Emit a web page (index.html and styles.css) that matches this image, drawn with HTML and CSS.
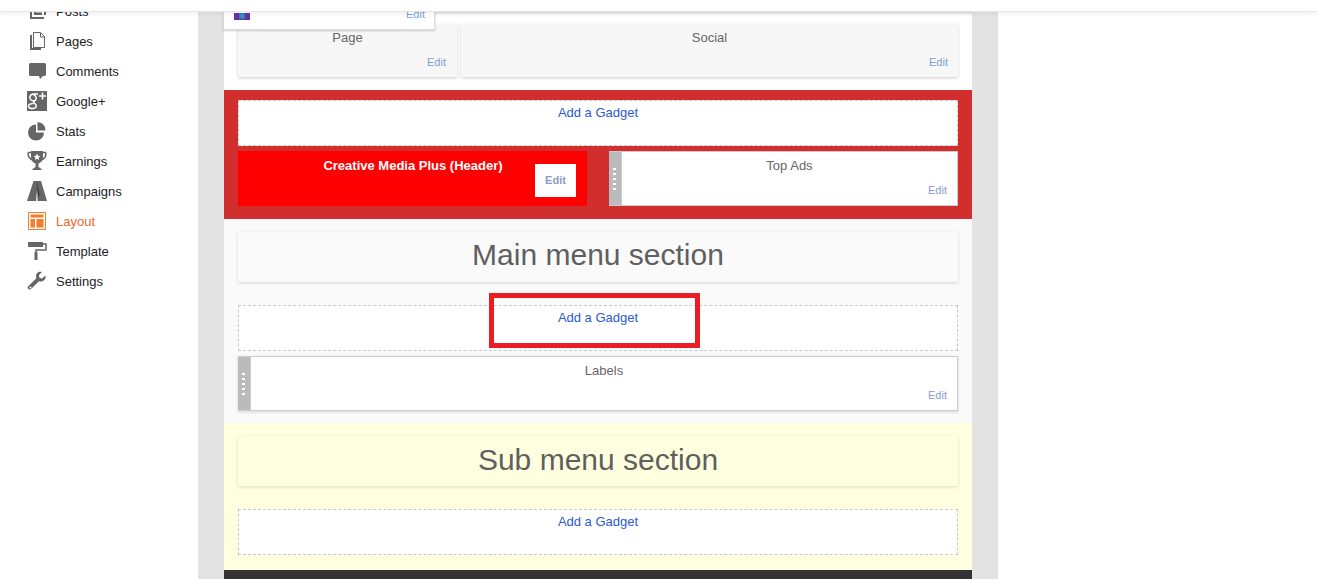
FILE: index.html
```html
<!DOCTYPE html>
<html lang="en">
<head>
    <meta charset="UTF-8">
    <title>Layout</title>
    <link rel="stylesheet" href="styles.css">
</head>
<body>
    <div class="topbar"></div>
    <div class="main">
        <nav class="sidebar">
            <a class="nav-item">
                <svg class="nav-icon" viewBox="0 0 20 20"><path d="M6 1h13v13h-2V3H6z M3 5h2v11h12v2H3z M7 5h8v9H7z" fill="#666"/><path d="M9 8h8M9 11h8" stroke="#fff"/></svg>
                <span>Posts</span>
            </a>
            <a class="nav-item">
                <svg class="nav-icon" viewBox="0 0 20 20"><path d="M3 4h2v13h9v2H3z" fill="#666"/><path d="M6.500 1.500h7l4 4v11h-11z" fill="#fff" stroke="#666"/><path d="M13.500 2v4h4" fill="none" stroke="#666"/></svg>
                <span>Pages</span>
            </a>
            <a class="nav-item">
                <svg class="nav-icon" viewBox="0 0 20 20"><path d="M3.500 2h14a1.500 1.500 0 0 1 1.500 1.500v10a1.500 1.500 0 0 1-1.500 1.500H16l-3 3-1-3H3.500A1.500 1.500 0 0 1 2 13.500v-10A1.500 1.500 0 0 1 3.500 2z" fill="#666"/></svg>
                <span>Comments</span>
            </a>
            <a class="nav-item">
                <svg class="nav-icon" viewBox="0 0 20 20"><rect width="20" height="20" fill="#666"/><path d="M15.500 1.500v7M12 5h7" stroke="#fff" stroke-width="1.600"/><path d="M11 3H6.500a3 3 0 0 0-.5 6.800c2 .4 3.500-1 3-3.300C8.600 4.800 7 3.400 5.800 3.500M7.500 10c-1 1-1 1.800.8 3.200 1.700 1.400 1.500 4-2.300 4.300-2.800.2-4.500-.8-4.500-2.400 0-1.800 2.300-2.700 5-2.500" fill="none" stroke="#fff" stroke-width="1.500"/></svg>
                <span>Google+</span>
            </a>
            <a class="nav-item">
                <svg class="nav-icon" viewBox="0 0 20 20"><path d="M9 3.500a8 8 0 1 0 8 8H9z" fill="#666"/><path d="M10.500 1a8 8 0 0 1 8 8.500h-8z" fill="#666"/></svg>
                <span>Stats</span>
            </a>
            <a class="nav-item">
                <svg class="nav-icon" viewBox="0 0 20 20"><path d="M1 1.500h3M16 1.500h3M1 1.500c0 5 2 7 5 7.500M19 1.500c0 5-2 7-5 7.500" fill="none" stroke="#666" stroke-width="1.500"/><path d="M4 0h12v6c0 4-2.500 6-4.500 6.500V16l3 2v1h-9v-1l3-2v-3.500C6.500 12 4 10 4 6z" fill="#666"/><path d="M10 2.500l1 2.300 2.400.2-1.800 1.600.6 2.400-2.200-1.300-2.200 1.300.6-2.400L6.600 5 9 4.800z" fill="#fff"/></svg>
                <span>Earnings</span>
            </a>
            <a class="nav-item">
                <svg class="nav-icon" viewBox="0 0 20 20"><path d="M6.500 0H11L9 20H0z" fill="#666"/><path d="M10 0h4l6 20h-9.500z" fill="#666"/><path d="M10 1l2.500 13-.9 3-1.400-9z" fill="#333"/></svg>
                <span>Campaigns</span>
            </a>
            <a class="nav-item active">
                <svg class="nav-icon" viewBox="0 0 20 20"><rect x="1.500" y="1.500" width="17" height="17" fill="#fff" stroke="#f57d2c"/><path d="M3.500 3.500h13v3h-13zM3.500 8h4.500v8.500H3.500zM9.500 8h7v8.500h-7z" fill="#f57d2c"/></svg>
                <span>Layout</span>
            </a>
            <a class="nav-item">
                <svg class="nav-icon" viewBox="0 0 20 20"><path d="M1 1h15v5H1z" fill="#666"/><path d="M16 3h3v6H9v2" fill="none" stroke="#666" stroke-width="1.500"/><path d="M7.500 11h3v8h-3z" fill="#666"/></svg>
                <span>Template</span>
            </a>
            <a class="nav-item">
                <svg class="nav-icon" viewBox="0 0 20 20"><path d="M18.500 4.500l-3.500 3-2.500-.8-.6-2.500L15 1c-3-1-6.200 1-6 4.500 0 .8.200 1.300.4 1.800L1 15.500c-1 1 0 3.500 2.500 3l8.500-8.200c3.500 1 7.500-1.500 6.500-5.800z" fill="#666"/><circle cx="3.500" cy="16.500" r="1" fill="#fff"/></svg>
                <span>Settings</span>
            </a>
        </nav>

        <div class="canvas">
            <div class="sheet">
                <section class="band band-top">
                    <div class="row">
                        <div class="widget widget-flat widget-page">
                            <p class="widget-title">Page</p>
                            <a class="edit-link">Edit</a>
                        </div>
                        <div class="widget widget-flat widget-social">
                            <p class="widget-title">Social</p>
                            <a class="edit-link">Edit</a>
                        </div>
                    </div>
                </section>

                <section class="band band-red">
                    <a class="add-gadget">Add a Gadget</a>
                    <div class="row row-header">
                        <div class="header-widget">
                            <p class="header-title">Creative Media Plus (Header)</p>
                            <a class="header-edit">Edit</a>
                        </div>
                        <div class="widget widget-drag">
                            <div class="grip"><i></i><i></i><i></i><i></i><i></i></div>
                            <div class="widget-body">
                                <p class="widget-title">Top Ads</p>
                                <a class="edit-link edit-muted">Edit</a>
                            </div>
                        </div>
                    </div>
                </section>

                <section class="band band-main">
                    <h2 class="section-title">Main menu section</h2>
                    <a class="add-gadget add-gadget-spaced">Add a Gadget</a>
                    <div class="widget widget-drag widget-labels">
                        <div class="grip"><i></i><i></i><i></i><i></i><i></i></div>
                        <div class="widget-body">
                            <p class="widget-title">Labels</p>
                            <a class="edit-link edit-muted">Edit</a>
                        </div>
                    </div>
                </section>

                <section class="band band-sub">
                    <h2 class="section-title">Sub menu section</h2>
                    <a class="add-gadget add-gadget-spaced">Add a Gadget</a>
                </section>

                <section class="band band-dark"></section>
            </div>
        </div>
    </div>

    <!-- widget being dragged, floats over the sheet -->
    <div class="float-card">
        <svg class="float-icon" viewBox="0 0 16 7"><rect width="16" height="7" fill="#6a2fa0"/><rect x="5" y="0" width="6" height="6" fill="#2f7fc0"/><rect x="7" y="2" width="2" height="2" fill="#30b090"/></svg>
        <a class="edit-link float-edit">Edit</a>
    </div>
    <!-- annotation drawn on the screenshot -->
    <div class="callout"></div>
</body>
</html>
```

FILE: styles.css
```css
* {
    margin: 0;
    padding: 0;
    box-sizing: border-box;
    font-family: "Liberation Sans", Arial, sans-serif;
}

html, body {
    height: 100%;
    overflow: hidden;
}

body {
    background: #fff;
    color: #222;
    font-size: 13px;
}

.topbar {
    position: relative;
    z-index: 3;
    height: 12px;
    background: #fff;
    border-bottom: 1px solid #e5e5e5;
    box-shadow: 0 1px 6px rgba(0, 0, 0, 0.08);
}

.main {
    display: flex;
    height: 567px;
    overflow: hidden;
}

/* sidebar, scrolled so the first row is cut by the top bar */
.sidebar {
    width: 198px;
    flex-shrink: 0;
    margin-top: -16px;
    padding-left: 27px;
}

.nav-item {
    display: flex;
    align-items: center;
    height: 30px;
    color: #222;
}

.nav-item.active {
    color: #f1662a;
}

.nav-icon {
    width: 20px;
    height: 20px;
    margin-right: 9px;
    flex-shrink: 0;
}

.canvas {
    width: 800px;
    flex-shrink: 0;
    padding: 0 26px;
    background: #e3e3e3;
}

.band {
    padding: 0 14px;
}

.band-top {
    height: 78px;
    padding-top: 12px;
    background: #fff;
    box-shadow: inset 0 3px 3px -2px rgba(0, 0, 0, 0.2);
}

.row {
    display: flex;
}

.widget-title {
    color: #666;
    text-align: center;
    line-height: 16px;
}

.widget-flat {
    position: relative;
    height: 53px;
    padding-top: 6px;
    background: #f7f7f7;
    box-shadow: 0 1px 3px rgba(0, 0, 0, 0.2);
}

.widget-page {
    width: 219px;
    margin-right: 4px;
}

.widget-social {
    width: 497px;
}

.edit-link {
    display: block;
    color: #7c9fd6;
    font-size: 11px;
    line-height: 13px;
    text-align: right;
    padding-right: 10px;
}

.edit-muted {
    color: #8c9bc7;
}

.widget-flat .edit-link {
    margin-top: 10px;
}

.widget-page .edit-link {
    padding-right: 11px;
}

.add-gadget {
    display: block;
    height: 46px;
    padding-top: 4px;
    background: #fff;
    border: 1px dashed #c8c8c8;
    color: #2a5bd0;
    line-height: 15px;
    text-align: center;
}

.band-red {
    height: 129px;
    padding-top: 10px;
    background: #d12e2e;
}

.row-header {
    justify-content: space-between;
    margin-top: 5px;
}

.header-widget {
    display: flex;
    justify-content: flex-end;
    width: 349px;
    height: 55px;
    padding-right: 11px;
    background: #f00;
    position: relative;
}

.header-title {
    position: absolute;
    left: 0;
    width: 350px;
    top: 7px;
    color: #fff;
    font-weight: bold;
    font-size: 13px;
    line-height: 16px;
    text-align: center;
}

.header-edit {
    width: 41px;
    height: 33px;
    margin-top: 13px;
    background: #fff;
    color: #8c9bc7;
    font-size: 11px;
    font-weight: bold;
    line-height: 33px;
    text-align: center;
}

.widget-drag {
    display: flex;
    width: 349px;
    height: 55px;
    background: #fff;
    border: 1px solid #ccc;
    border-left: 0;
}

.grip {
    display: flex;
    flex-direction: column;
    justify-content: center;
    gap: 3px;
    width: 13px;
    padding-left: 4px;
    background: #bbb;
    border-right: 1px solid #ccc;
}

.grip i {
    display: block;
    width: 3px;
    height: 2px;
    background: #fff;
}

.widget-body {
    flex: 1;
    padding-top: 6px;
}

.widget-body .edit-link {
    margin-top: 10px;
}

.band-main {
    height: 204px;
    padding-top: 13px;
    background: #fafafa;
}

.section-title {
    height: 50px;
    background: #fafafa;
    color: #5f5f5f;
    font-size: 30px;
    font-weight: normal;
    line-height: 46px;
    text-align: center;
    box-shadow: 0 1px 3px rgba(0, 0, 0, 0.15);
}

.add-gadget-spaced {
    margin-top: 23px;
}

.widget-labels {
    width: 720px;
    height: 55px;
    margin-top: 5px;
    box-shadow: 0 1px 3px rgba(0, 0, 0, 0.15);
}

.band-sub {
    height: 147px;
    padding-top: 13px;
    background: #ffffdf;
}

.band-sub .section-title {
    background: #ffffdf;
    line-height: 48px;
}

.band-dark {
    height: 20px;
    background: #333;
}

.float-card {
    position: absolute;
    z-index: 2;
    left: 223px;
    top: 0;
    width: 212px;
    height: 30px;
    background: #fff;
    border: 1px solid #ddd;
    box-shadow: 0 1px 2px rgba(0, 0, 0, 0.2);
}

.float-icon {
    position: absolute;
    left: 10px;
    top: 12px;
    width: 16px;
    height: 7px;
}

.float-edit {
    position: absolute;
    right: 9px;
    top: 7px;
    padding: 0;
}

.callout {
    position: absolute;
    z-index: 4;
    left: 489px;
    top: 293px;
    width: 211px;
    height: 55px;
    border: 5px solid #ed1c24;
}
```
